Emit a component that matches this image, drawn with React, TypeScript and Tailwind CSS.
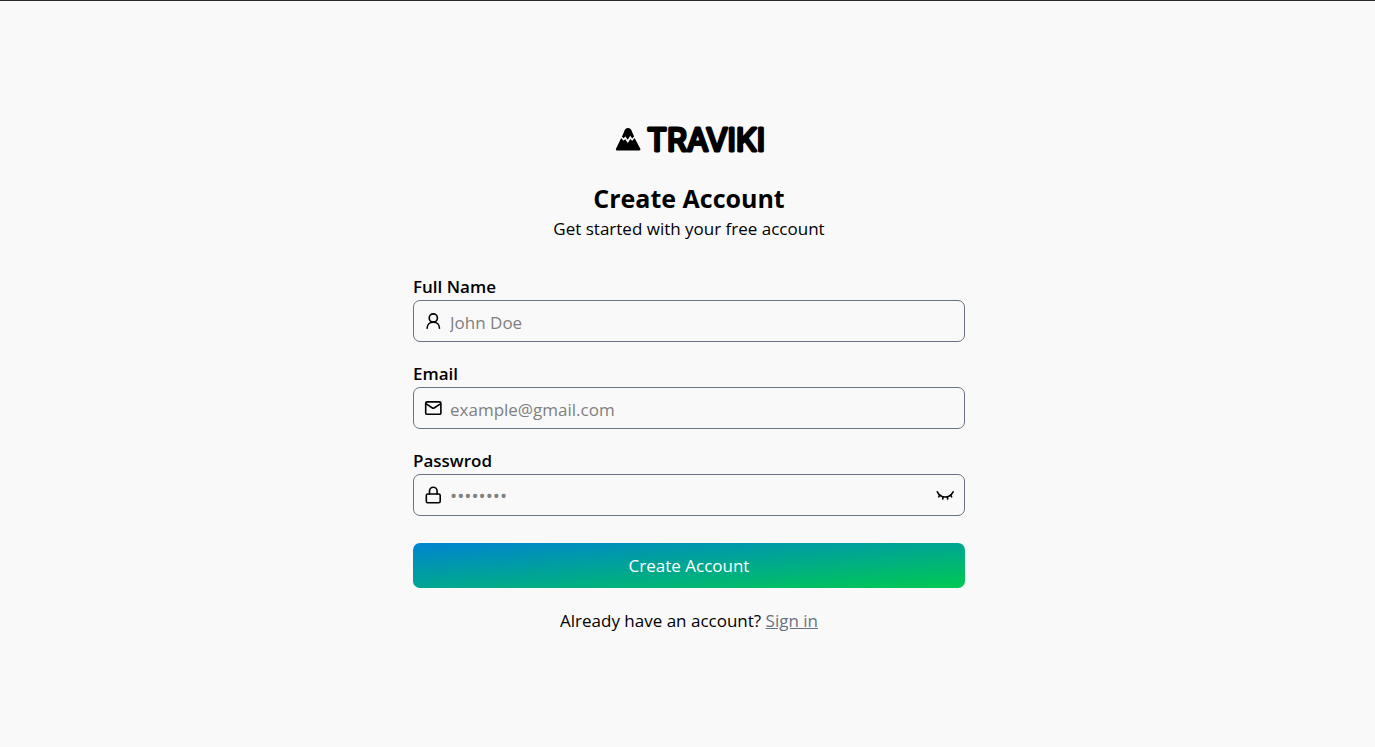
import { useState } from "react";
import type { ReactNode } from "react";

type FieldProps = {
  id: string;
  label: string;
  type: string;
  placeholder: string;
  placeholderSize?: string;
  icon: ReactNode;
  action?: ReactNode;
};

function Icon({ children }: { children: ReactNode }) {
  return (
    <svg
      viewBox="0 0 18 18"
      className="size-[18px] shrink-0"
      fill="none"
      stroke="currentColor"
      strokeWidth="1.6"
      strokeLinecap="round"
      strokeLinejoin="round"
      aria-hidden="true"
    >
      {children}
    </svg>
  );
}

function PersonIcon() {
  return (
    <Icon>
      <circle cx="9.3" cy="6" r="4.1" />
      <path d="M3.1 16.2C3.1 12.6 5.8 10.1 9.3 10.1S15.5 12.6 15.5 16.2" />
    </Icon>
  );
}

function MailIcon() {
  return (
    <Icon>
      <rect x="1.7" y="2.9" width="15.2" height="12.4" rx="1.4" />
      <path d="M2.2 4.9 8.5 9Q9.3 9.5 10.1 9L16.4 4.9" />
    </Icon>
  );
}

function LockIcon() {
  return (
    <Icon>
      <rect x="2.3" y="8" width="13.9" height="8.7" rx="1.5" />
      <path d="M5.5 8V5.1a3.8 3.8 0 0 1 7.6 0V8" />
    </Icon>
  );
}

function EyeClosedIcon() {
  return (
    <Icon>
      <path d="M1.3 5.8C3 9.1 5.8 11 9.2 11S15.4 9.1 17.1 5.8" />
      <path d="M3.7 9 2.8 10.9M7.2 10.8 6.7 13M11.2 10.8 11.7 13M14.7 9 15.6 10.9" />
    </Icon>
  );
}

function EyeIcon() {
  return (
    <Icon>
      <path d="M1 9C3 5.3 5.7 3.5 9 3.5S15 5.3 17 9C15 12.7 12.3 14.5 9 14.5S3 12.7 1 9Z" />
      <circle cx="9" cy="9" r="2.4" />
    </Icon>
  );
}

function Field({ id, label, type, placeholder, placeholderSize = "placeholder:text-[17px]", icon, action }: FieldProps) {
  return (
    <div className="flex flex-col">
      <label htmlFor={id} className="text-[17px] leading-[26px] font-semibold">
        {label}
      </label>
      <div className="flex h-[42px] items-center gap-2 rounded-[7px] border border-[#6a7282] px-[10px]">
        {icon}
        <input
          id={id}
          type={type}
          placeholder={placeholder}
          className={`h-10 min-w-0 flex-1 bg-transparent pt-[2px] text-[17px] outline-none placeholder:text-[#808080] ${placeholderSize}`}
        />
        {action}
      </div>
    </div>
  );
}

function Logo() {
  return (
    <svg viewBox="0 0 160 44" className="mx-auto h-11 w-40" role="img" aria-label="Traviki">
      <path d="M12.9 19.8 15.2 14.4Q15.9 11.3 19 11.1 22.1 11.3 22.9 14.4L25.1 19.4 23.2 21.4 21.2 18.8 18.8 22.7 16.4 19.4 14.6 21.2Z" />
      <path d="M12.2 21 14.4 23.7 16.2 22.3 18.8 26 21.4 21.9 23.2 23.9 25.6 21 31.3 31.8Q32 33.4 30.4 33.4H7.9Q6.3 33.4 7 31.8Z" />
      <text
        x="38"
        y="34"
        fontSize="31"
        stroke="black"
        strokeWidth="3"
        strokeLinejoin="round"
        className="font-['Inter',sans-serif] font-normal"
      >
        TRAVIKI
      </text>
    </svg>
  );
}

export default function App() {
  const [visible, setVisible] = useState(false);

  return (
    <main className="flex min-h-screen flex-col items-center border-t border-[#26282c] bg-[#f9f9f9] pt-[116px] pl-[3px] font-['Open_Sans','Noto_Sans',sans-serif] text-black">
      <div className="w-full max-w-[552px]">
        <Logo />
        <header className="mt-5 text-center">
          <h1 className="text-[25px] leading-[35px] font-bold">Create Account</h1>
          <p className="text-[17px] leading-[26px]">Get started with your free account</p>
        </header>
        <form className="mt-8 flex flex-col" onSubmit={(e) => e.preventDefault()}>
          <div className="flex flex-col gap-[19px]">
            <Field id="name" label="Full Name" type="text" placeholder="John Doe" icon={<PersonIcon />} />
            <Field id="email" label="Email" type="email" placeholder="example@gmail.com" icon={<MailIcon />} />
            <Field
              id="password"
              label="Passwrod"
              type={visible ? "text" : "password"}
              placeholder="••••••••"
              placeholderSize="placeholder:text-[19px]"
              icon={<LockIcon />}
              action={
                <button type="button" aria-label="Toggle password visibility" onClick={() => setVisible(!visible)}>
                  {visible ? <EyeIcon /> : <EyeClosedIcon />}
                </button>
              }
            />
          </div>
          <button
            type="submit"
            className="mt-[27px] h-[45px] rounded-[7px] bg-linear-to-br/srgb from-[#0084d1] to-[#00c951] text-[17px] leading-[26px] text-white"
          >
            Create Account
          </button>
        </form>
        <p className="mt-5 text-center text-[17px] leading-[26px]">
          Already have an account?{" "}
          <a href="#signin" className="text-[#6a7282] underline">
            Sign in
          </a>
        </p>
      </div>
    </main>
  );
}
